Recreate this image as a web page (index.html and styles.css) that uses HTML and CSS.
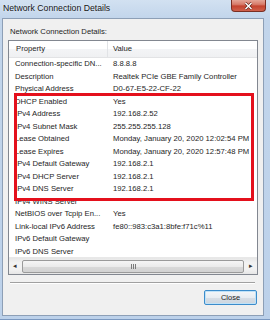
FILE: index.html
```html
<!DOCTYPE html>
<html lang="en">

<head>
    <meta charset="UTF-8">
    <title>Network Connection Details</title>
    <link rel="stylesheet" href="styles.css">
</head>

<body>
    <div class="window">
        <div class="titlebar">
            <span class="title">Network Connection Details</span>
            <div class="close-x">
                <svg width="9" height="8" viewBox="0 0 9 8">
                    <path d="M1.5 1 L7.5 7 M7.5 1 L1.5 7" stroke="#5a1d14" stroke-width="2.6" fill="none" />
                    <path d="M1.5 1 L7.5 7 M7.5 1 L1.5 7" stroke="#ffffff" stroke-width="1.5" fill="none" />
                </svg>
            </div>
        </div>

        <div class="panel">
            <div class="group-label">Network Connection Details:</div>

            <div class="listbox">
                <div class="list-header">
                    <div class="col-prop">Property</div>
                    <div class="col-val">Value</div>
                </div>

                <div class="list-rows">
                    <div class="row"><div class="col-prop">Connection-specific DN...</div><div class="col-val">8.8.8.8</div></div>
                    <div class="row"><div class="col-prop">Description</div><div class="col-val">Realtek PCIe GBE Family Controller</div></div>
                    <div class="row"><div class="col-prop">Physical Address</div><div class="col-val">D0-67-E5-22-CF-22</div></div>
                    <div class="row"><div class="col-prop">DHCP Enabled</div><div class="col-val">Yes</div></div>
                    <div class="row"><div class="col-prop">IPv4 Address</div><div class="col-val">192.168.2.52</div></div>
                    <div class="row"><div class="col-prop">IPv4 Subnet Mask</div><div class="col-val">255.255.255.128</div></div>
                    <div class="row"><div class="col-prop">Lease Obtained</div><div class="col-val">Monday, January 20, 2020 12:02:54 PM</div></div>
                    <div class="row"><div class="col-prop">Lease Expires</div><div class="col-val">Monday, January 20, 2020 12:57:48 PM</div></div>
                    <div class="row"><div class="col-prop">IPv4 Default Gateway</div><div class="col-val">192.168.2.1</div></div>
                    <div class="row"><div class="col-prop">IPv4 DHCP Server</div><div class="col-val">192.168.2.1</div></div>
                    <div class="row"><div class="col-prop">IPv4 DNS Server</div><div class="col-val">192.168.2.1</div></div>
                    <div class="row"><div class="col-prop">IPv4 WINS Server</div><div class="col-val"></div></div>
                    <div class="row"><div class="col-prop">NetBIOS over Tcpip En...</div><div class="col-val">Yes</div></div>
                    <div class="row"><div class="col-prop">Link-local IPv6 Address</div><div class="col-val">fe80::983:c3a1:8bfe:f71c%11</div></div>
                    <div class="row"><div class="col-prop">IPv6 Default Gateway</div><div class="col-val"></div></div>
                    <div class="row"><div class="col-prop">IPv6 DNS Server</div><div class="col-val"></div></div>
                </div>

                <div class="hscroll">
                    <div class="arrow">&#9666;</div>
                    <div class="thumb"><span class="grip"></span></div>
                    <div class="arrow">&#9656;</div>
                </div>
            </div>

            <div class="sep"></div>

            <div class="buttons">
                <button class="close-btn">Close</button>
            </div>
        </div>
    </div>

    <!-- red annotation frame -->
    <div class="highlight"></div>
</body>

</html>
```

FILE: styles.css
```css
body {
    margin: 0;
    font-family: "Liberation Sans", Arial, sans-serif;
    font-size: 7.7px;
    color: #1e1e1e;
    position: relative;
}

.window {
    width: 270px;
    height: 320px;
    box-sizing: border-box;
    display: flex;
    flex-direction: column;
    background: linear-gradient(#d2e1f1, #c2d5eb 18px, #bcd1ea);
    box-shadow: inset 0 -1px #7a98c0;
}

.titlebar {
    height: 18px;
    display: flex;
    justify-content: space-between;
    align-items: flex-start;
}

.title {
    padding-left: 3px;
    line-height: 17px;
    font-size: 8.7px;
    color: #151515;
    text-shadow: 0 0 3px #e8f0fa;
}

.close-x {
    width: 35px;
    height: 12px;
    margin-right: 4px;
    box-sizing: border-box;
    border: 1px solid #7a2e22;
    border-top: none;
    border-radius: 0 0 4px 4px;
    background: linear-gradient(#e4a597, #d77b6a 40%, #c4432f 55%, #d0614c);
    display: flex;
    align-items: center;
    justify-content: center;
}

.panel {
    height: 298px;
    margin: 0 6px 0 2px;
    box-sizing: border-box;
    border: 1px solid #8d9fb6;
    background-color: #f0f0f0;
    padding: 7px 5px 0 5px;
}

.group-label {
    line-height: 11px;
    margin: 0 0 3px 2px;
}

.listbox {
    height: 235px;
    box-sizing: border-box;
    border: 1px solid #828790;
    background-color: #ffffff;
    display: flex;
    flex-direction: column;
}

.list-header {
    height: 17px;
    display: flex;
    box-sizing: border-box;
    border-bottom: 1px solid #e2e3e5;
    background: linear-gradient(#ffffff, #ffffff 50%, #f3f4f6 50%, #eff0f2);
}

.list-header .col-prop {
    width: 99px;
    box-sizing: border-box;
    padding-left: 7px;
    line-height: 16px;
    border-right: 1px solid #e1e3e6;
}

.list-header .col-val {
    padding-left: 5px;
    line-height: 16px;
}

.list-rows {
    height: 200px;
    overflow: hidden;
}

.row {
    height: 12.5px;
    line-height: 12.5px;
    display: flex;
    white-space: nowrap;
}

.row .col-prop {
    width: 99px;
    flex-shrink: 0;
    box-sizing: border-box;
    padding-left: 6px;
    overflow: hidden;
}

.row .col-val {
    padding-left: 5px;
}

.hscroll {
    height: 16px;
    display: flex;
    align-items: center;
    gap: 3px;
    padding: 0 2px;
    background: linear-gradient(#e6e6e6, #f2f2f2 30%, #f2f2f2 70%, #e6e6e6);
    border-top: 1px solid #e8e8e8;
}

.arrow {
    width: 8px;
    font-size: 7px;
    text-align: center;
    color: #333;
}

.thumb {
    flex: 1;
    height: 13px;
    box-sizing: border-box;
    border: 1px solid #9a9a9a;
    border-radius: 2px;
    background: linear-gradient(#f5f5f5, #ebebeb 50%, #d9d9d9 50%, #d2d2d2);
    display: flex;
    align-items: center;
    justify-content: center;
}

.grip {
    width: 5px;
    height: 5px;
    background: repeating-linear-gradient(90deg, #7a7a7a 0 1px, transparent 1px 2px);
}

.sep {
    margin: 7px 3px 0 2px;
    border-top: 1px solid #a0a0a0;
    border-bottom: 1px solid #ffffff;
}

.buttons {
    display: flex;
    justify-content: flex-end;
    margin-top: 6px;
    padding-right: 1px;
}

.close-btn {
    width: 53px;
    height: 15px;
    padding: 0;
    font-family: inherit;
    font-size: 7.5px;
    color: #1e1e1e;
    border: 1px solid #3c8ccb;
    border-radius: 2px;
    background: linear-gradient(#f3f6f9, #e8edf2 50%, #d8dfe7 50%, #cdd5de);
    box-shadow: inset 0 0 0 1px #bfe2f8;
}

.highlight {
    position: absolute;
    left: 14px;
    top: 93px;
    width: 240px;
    height: 108px;
    box-sizing: border-box;
    border: 3px solid #e4101c;
}
```
